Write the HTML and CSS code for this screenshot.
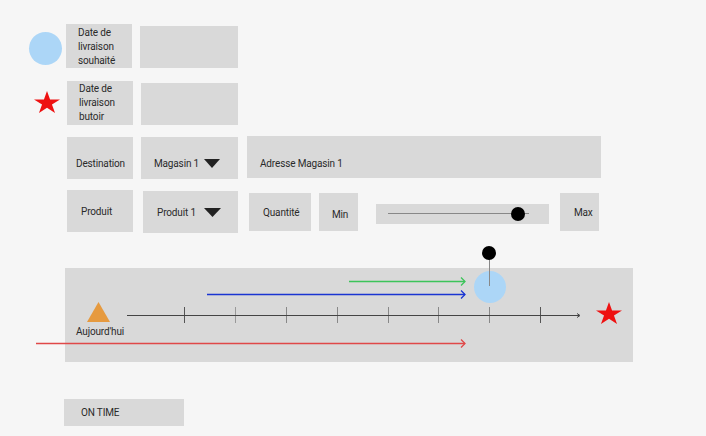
FILE: index.html
```html
<!DOCTYPE html>
<html lang="fr">
<head>
<meta charset="utf-8">
<title>Livraison</title>
<link rel="stylesheet" href="styles.css">
</head>
<body>
<div class="page">
  <div class="row row-1">
    <div class="dot-wish"></div>
    <div class="box label-box">Date de<br>livraison<br>souhaité</div>
    <div class="box empty-box"></div>
  </div>
  <div class="row row-2">
    <svg class="star-icon" viewBox="0 0 26 22" width="26" height="22"><polygon points="13,0 16.07,8.4 26,8.4 17.96,13.6 21.04,22 13,16.81 4.96,22 8.04,13.6 0,8.4 9.93,8.4" fill="#ee1111"/></svg>
    <div class="box label-box label-box-2">Date de<br>livraison<br>butoir</div>
    <div class="box empty-box"></div>
  </div>
  <div class="row row-3">
    <div class="box field dest">Destination</div>
    <div class="box select magasin"><span>Magasin 1</span><svg class="caret" viewBox="0 0 16 9" width="16" height="9"><polygon points="0,0 16,0 8,9" fill="#222"/></svg></div>
    <div class="box field adresse">Adresse Magasin 1</div>
  </div>
  <div class="row row-4">
    <div class="box field produit">Produit</div>
    <div class="box select produit1"><span>Produit 1</span><svg class="caret" viewBox="0 0 17 9" width="17" height="9"><polygon points="0,0 17,0 8.5,9" fill="#222"/></svg></div>
    <div class="box field qty">Quantité</div>
    <div class="box field minmax min">Min</div>
    <div class="box slider"><div class="slider-track"></div><div class="slider-knob"></div></div>
    <div class="box field minmax max">Max</div>
  </div>
  <div class="timeline">
    <svg class="timeline-art" width="568" height="94" viewBox="0 0 568 94">
      <g stroke="#555" stroke-width="1">
        <line x1="119.5" y1="39" x2="119.5" y2="55"/>
        <line x1="170.5" y1="39" x2="170.5" y2="55" stroke="#999"/>
        <line x1="221.5" y1="39" x2="221.5" y2="55" stroke="#888"/>
        <line x1="272.5" y1="39" x2="272.5" y2="55" stroke="#888"/>
        <line x1="323.5" y1="39" x2="323.5" y2="55" stroke="#888"/>
        <line x1="373.5" y1="39" x2="373.5" y2="55" stroke="#888"/>
        <line x1="424.5" y1="39" x2="424.5" y2="55" stroke="#888"/>
        <line x1="475.5" y1="39" x2="475.5" y2="55"/>
      </g>
      <line x1="62" y1="47.5" x2="514" y2="47.5" stroke="#444" stroke-width="1"/>
      <polyline points="512,45.5 515,47.5 512,49.5" fill="none" stroke="#444" stroke-width="1"/>
      <circle cx="425" cy="19" r="16" fill="#acd6f7"/>
      <line x1="424.5" y1="-15" x2="424.5" y2="18" stroke="#888" stroke-width="1"/>
      <circle cx="424" cy="-15" r="7" fill="#000"/>
      <line x1="284" y1="13.5" x2="400" y2="13.5" stroke="#3cc45a" stroke-width="1.3"/>
      <polyline points="396,9.5 400,13.5 396,17.5" fill="none" stroke="#3cc45a" stroke-width="1.3"/>
      <line x1="142" y1="26.5" x2="400" y2="26.5" stroke="#1a35d2" stroke-width="1.3"/>
      <polyline points="396,22.5 400,26.5 396,30.5" fill="none" stroke="#1a35d2" stroke-width="1.3"/>
      <line x1="-29" y1="75.5" x2="400" y2="75.5" stroke="#e04848" stroke-width="1.3"/>
      <polyline points="396,71.5 400,75.5 396,79.5" fill="none" stroke="#e04848" stroke-width="1.3"/>
      <polygon points="22,54 33.5,34 45,54" fill="#e69a3f"/>
      <polygon transform="translate(531,34)" points="13,0 16.07,8.4 26,8.4 17.96,13.6 21.04,22 13,16.81 4.96,22 8.04,13.6 0,8.4 9.93,8.4" fill="#ee1111"/>
    </svg>
    <span class="today">Aujourd'hui</span>
  </div>
  <div class="box status">ON TIME</div>
</div>
</body>
</html>
```
FILE: styles.css
```css
html, body {
  margin: 0;
  padding: 0;
  background: #f6f6f6;
}
body {
  width: 706px;
  height: 436px;
  overflow: hidden;
  font-family: Roboto, "Liberation Sans", sans-serif;
  font-size: 10px;
  letter-spacing: -0.15px;
  color: #2a2a2a;
}
.page {
  padding-top: 24px;
}
.row {
  display: flex;
  align-items: flex-start;
}
.box {
  background: #d9d9d9;
  box-sizing: border-box;
}
.row-1 {
  padding-left: 29px;
}
.dot-wish {
  width: 33px;
  height: 33px;
  border-radius: 50%;
  background: #acd6f7;
  margin-top: 8px;
}
.label-box {
  width: 66px;
  height: 44px;
  margin-left: 4px;
  padding: 2px 0 0 12px;
  line-height: 14px;
}
.empty-box {
  width: 98px;
  height: 42px;
  margin-left: 8px;
  margin-top: 2px;
}
.row-2 {
  margin-top: 13px;
  padding-left: 34px;
}
.star-icon {
  display: block;
  margin-top: 10px;
}
.row-2 .label-box-2 {
  margin-left: 7px;
  padding-top: 1px;
}
.row-2 .empty-box {
  width: 97px;
}
.field, .select {
  display: flex;
  align-items: center;
  height: 42px;
}
.row-3 {
  margin-top: 11px;
  padding-left: 67px;
}
.dest {
  width: 66px;
  margin-top: 1px;
  padding: 10px 0 0 9px;
}
.select {
  justify-content: space-between;
}
.caret {
  display: block;
}
.magasin {
  width: 97px;
  margin-left: 8px;
  margin-top: 1px;
  padding: 10px 18px 0 13px;
}
.adresse {
  width: 354px;
  margin-left: 9px;
  padding: 12px 0 0 13px;
}
.row-4 {
  margin-top: 11px;
  padding-left: 67px;
}
.produit {
  width: 66px;
  padding: 0 0 0 14px;
}
.produit1 {
  width: 95px;
  margin-left: 10px;
  margin-top: 1px;
  padding: 0 17px 0 14px;
}
.qty {
  width: 62px;
  height: 38px;
  margin-left: 11px;
  margin-top: 3px;
  padding: 0 0 0 14px;
}
.minmax {
  width: 39px;
  height: 38px;
  margin-top: 3px;
  padding-left: 13px;
}
.min {
  margin-left: 8px;
  padding-top: 4px;
}
.max {
  margin-left: 11px;
  padding-left: 14px;
}
.slider {
  position: relative;
  width: 173px;
  height: 20px;
  margin-left: 18px;
  margin-top: 14px;
}
.slider-track {
  position: absolute;
  left: 12px;
  top: 9px;
  width: 141px;
  height: 1px;
  background: #888;
}
.slider-knob {
  position: absolute;
  left: 135px;
  top: 3px;
  width: 14px;
  height: 14px;
  border-radius: 50%;
  background: #000;
}
.timeline {
  position: relative;
  width: 568px;
  height: 94px;
  margin: 35px 0 0 65px;
  background: #d9d9d9;
}
.timeline-art {
  position: absolute;
  left: 0;
  top: 0;
  overflow: visible;
}
.today {
  position: absolute;
  left: 11px;
  top: 58px;
  line-height: 12px;
}
.status {
  width: 120px;
  height: 27px;
  margin: 37px 0 0 64px;
  padding-left: 17px;
  display: flex;
  align-items: center;
}
```
